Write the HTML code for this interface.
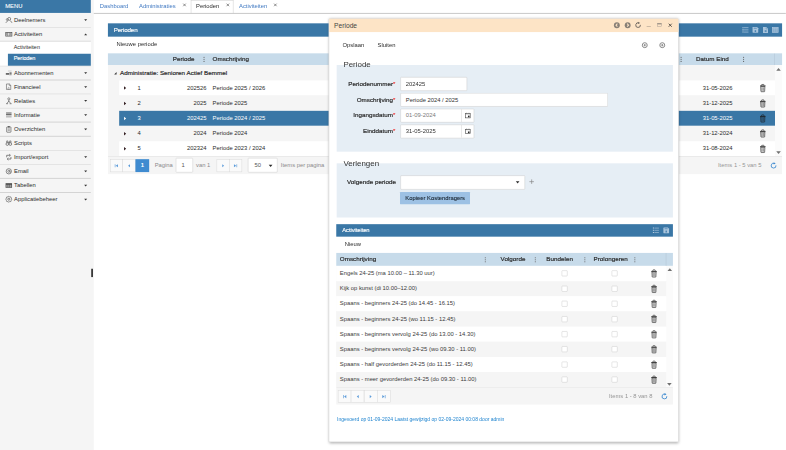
<!DOCTYPE html>
<html><head><meta charset="utf-8"><title>Perioden</title>
<style>
html,body{margin:0;padding:0;background:#fff;width:786px;height:450px;overflow:hidden}
#root{position:absolute;left:0;top:0;width:1886.4px;height:1080px;transform:scale(0.4166667);transform-origin:0 0;font-family:"Liberation Sans",sans-serif;font-size:14px;color:#2b2b2b;overflow:hidden}
#root div,#root svg{position:absolute;display:block}
#root svg{overflow:visible}
#root .tx{white-space:nowrap;transform:translateY(-50%);line-height:20px}
#root .tx span{position:static}
</style></head><body><div id="root">
<div style="left:0.00px;top:0.00px;width:224.88px;height:1080.00px;background:#f5f5f5"></div>
<div style="left:0.00px;top:0.00px;width:217.92px;height:31.44px;background:#3a77a6"></div>
<div class="tx" style="left:12.48px;top:14.88px;color:#fff;-webkit-text-stroke:0.2px #fff">MENU</div>
<div style="left:218.64px;top:644.88px;width:4.56px;height:19.92px;background:#2a2a2a"></div>
<div style="left:0.00px;top:64.85px;width:217.92px;height:1.34px;background:#cdcdcd"></div>
<svg style="left:13.20px;top:40.08px;width:16.32px;height:16.32px;opacity:.85" viewBox="0 0 16 16"><circle cx="9" cy="5.2" r="3.4" fill="none" stroke="#333" stroke-width="1.5"/><path d="M1 14.5L6 9.2 M15.5 14.5L11.5 9.2" stroke="#333" stroke-width="1.6" fill="none"/><circle cx="4.2" cy="6.8" r="2.2" fill="none" stroke="#333" stroke-width="1.3"/></svg>
<div class="tx" style="left:33.60px;top:47.28px;color:#2b2b2b">Deelnemers</div>
<svg style="left:202.08px;top:46.44px;width:7.20px;height:4.56px;" viewBox="0 0 10 6"><path d="M0 0H10L5 6Z" fill="#333"/></svg>
<div style="left:0.00px;top:98.45px;width:217.92px;height:1.34px;background:#cdcdcd"></div>
<svg style="left:13.20px;top:73.92px;width:16.32px;height:16.32px;opacity:.85" viewBox="0 0 16 16"><rect x="0.8" y="3.6" width="14.4" height="8.8" fill="none" stroke="#333" stroke-width="1.7"/><path d="M5.6 4V12 M10.4 4V12" stroke="#333" stroke-width="1.6"/><rect x="2" y="5" width="2.4" height="6" fill="#777"/><rect x="11.6" y="5" width="2.4" height="6" fill="#777"/></svg>
<div class="tx" style="left:33.60px;top:81.12px;color:#2b2b2b">Activiteiten</div>
<svg style="left:202.08px;top:79.80px;width:7.20px;height:4.56px;" viewBox="0 0 10 6"><path d="M0 6H10L5 0Z" fill="#333"/></svg>
<div style="left:0.00px;top:99.60px;width:217.92px;height:58.32px;background:#fff"></div>
<div class="tx" style="left:32.88px;top:114.00px;color:#2b2b2b;font-size:13px">Activiteiten</div>
<div style="left:19.20px;top:128.76px;width:198.72px;height:29.28px;background:#3a77a6"></div>
<div class="tx" style="left:32.88px;top:141.36px;color:#fff;font-size:13.4px;letter-spacing:-0.2px;-webkit-text-stroke:0.3px #fff">Perioden</div>
<div style="left:0.00px;top:157.80px;width:217.92px;height:0.96px;background:#d4d4d4"></div>
<div style="left:0.00px;top:191.23px;width:217.92px;height:1.34px;background:#cdcdcd"></div>
<svg style="left:13.20px;top:166.63px;width:16.32px;height:16.32px;opacity:.85" viewBox="0 0 16 16"><path d="M1 8.4H9V12H1Z" fill="#333"/><path d="M9.6 6.4H14.6V12H9.6Z" fill="#666"/><path d="M6 3.4H14.6" stroke="#aaa" stroke-width="1.4"/><path d="M9 14H14.6" stroke="#bbb" stroke-width="1"/></svg>
<div class="tx" style="left:33.60px;top:173.83px;color:#2b2b2b">Abonnementen</div>
<svg style="left:202.08px;top:172.99px;width:7.20px;height:4.56px;" viewBox="0 0 10 6"><path d="M0 0H10L5 6Z" fill="#333"/></svg>
<div style="left:0.00px;top:224.98px;width:217.92px;height:1.34px;background:#cdcdcd"></div>
<svg style="left:13.20px;top:200.38px;width:16.32px;height:16.32px;opacity:.85" viewBox="0 0 16 16"><path d="M2.5 1.5H9.5L12.5 4.5V14.5H2.5Z" fill="none" stroke="#444" stroke-width="1.4"/><path d="M9 1.5V5H12.5" fill="none" stroke="#444" stroke-width="1.2"/><path d="M9.5 10.5A2 2 0 1 0 9.5 13" fill="none" stroke="#444" stroke-width="1.1"/></svg>
<div class="tx" style="left:33.60px;top:207.58px;color:#2b2b2b">Financieel</div>
<svg style="left:202.08px;top:206.74px;width:7.20px;height:4.56px;" viewBox="0 0 10 6"><path d="M0 0H10L5 6Z" fill="#333"/></svg>
<div style="left:0.00px;top:258.72px;width:217.92px;height:1.34px;background:#cdcdcd"></div>
<svg style="left:13.20px;top:234.12px;width:16.32px;height:16.32px;opacity:.85" viewBox="0 0 16 16"><circle cx="8" cy="3.2" r="2.5" fill="none" stroke="#333" stroke-width="1.4"/><path d="M8 5.8V9 M8 8.4L3.6 14 M8 8.4L12.4 14 M1.6 14.6H6.2 M9.8 14.6H14.4" stroke="#333" stroke-width="1.5" fill="none"/></svg>
<div class="tx" style="left:33.60px;top:241.32px;color:#2b2b2b">Relaties</div>
<svg style="left:202.08px;top:240.48px;width:7.20px;height:4.56px;" viewBox="0 0 10 6"><path d="M0 0H10L5 6Z" fill="#333"/></svg>
<div style="left:0.00px;top:292.46px;width:217.92px;height:1.34px;background:#cdcdcd"></div>
<svg style="left:13.20px;top:267.86px;width:16.32px;height:16.32px;opacity:.85" viewBox="0 0 16 16"><path d="M1.5 3.2H14.5 M1.5 7H14.5" stroke="#333" stroke-width="2.2"/><path d="M1.5 10.6H14.5" stroke="#666" stroke-width="1.6"/><path d="M1.5 13.6H14.5" stroke="#aaa" stroke-width="1.2"/></svg>
<div class="tx" style="left:33.60px;top:275.06px;color:#2b2b2b">Informatie</div>
<svg style="left:202.08px;top:274.22px;width:7.20px;height:4.56px;" viewBox="0 0 10 6"><path d="M0 0H10L5 6Z" fill="#333"/></svg>
<div style="left:0.00px;top:326.21px;width:217.92px;height:1.34px;background:#cdcdcd"></div>
<svg style="left:13.20px;top:301.61px;width:16.32px;height:16.32px;opacity:.85" viewBox="0 0 16 16"><rect x="3" y="2.6" width="10" height="12.4" rx="1" fill="none" stroke="#333" stroke-width="1.5"/><rect x="5.8" y="0.8" width="4.4" height="3" fill="#333"/><path d="M5.5 7.4H10.5 M5.5 10.4H10.5" stroke="#333" stroke-width="1.3"/></svg>
<div class="tx" style="left:33.60px;top:308.81px;color:#2b2b2b">Overzichten</div>
<svg style="left:202.08px;top:307.97px;width:7.20px;height:4.56px;" viewBox="0 0 10 6"><path d="M0 0H10L5 6Z" fill="#333"/></svg>
<div style="left:0.00px;top:359.95px;width:217.92px;height:1.34px;background:#cdcdcd"></div>
<svg style="left:13.20px;top:335.35px;width:16.32px;height:16.32px;opacity:.85" viewBox="0 0 16 16"><circle cx="4.4" cy="10.6" r="3.1" fill="none" stroke="#333" stroke-width="1.5"/><circle cx="11.6" cy="10.6" r="3.1" fill="none" stroke="#333" stroke-width="1.5"/><path d="M3 8V3.2H6V8 M10 8V3.2H13V8 M6 7H10" stroke="#333" stroke-width="1.4" fill="none"/></svg>
<div class="tx" style="left:33.60px;top:342.55px;color:#2b2b2b">Scripts</div>
<div style="left:0.00px;top:393.70px;width:217.92px;height:1.34px;background:#cdcdcd"></div>
<svg style="left:13.20px;top:369.10px;width:16.32px;height:16.32px;opacity:.85" viewBox="0 0 16 16"><path d="M3 8.4V3.6H11 M9 1L11.8 3.6L9 6.2" fill="none" stroke="#333" stroke-width="1.6"/><path d="M13 7.6V12.4H5 M7 9.8L4.2 12.4L7 15" fill="none" stroke="#333" stroke-width="1.6"/></svg>
<div class="tx" style="left:33.60px;top:376.30px;color:#2b2b2b">Import/export</div>
<svg style="left:202.08px;top:375.46px;width:7.20px;height:4.56px;" viewBox="0 0 10 6"><path d="M0 0H10L5 6Z" fill="#333"/></svg>
<div style="left:0.00px;top:427.44px;width:217.92px;height:1.34px;background:#cdcdcd"></div>
<svg style="left:13.20px;top:402.84px;width:16.32px;height:16.32px;opacity:.85" viewBox="0 0 16 16"><circle cx="8" cy="8" r="6.2" fill="none" stroke="#333" stroke-width="1.5"/><circle cx="8" cy="8" r="2.4" fill="none" stroke="#333" stroke-width="1.4"/><path d="M10.6 5.6V9.4Q11 11 12.8 10" fill="none" stroke="#333" stroke-width="1.2"/></svg>
<div class="tx" style="left:33.60px;top:410.04px;color:#2b2b2b">Email</div>
<svg style="left:202.08px;top:409.20px;width:7.20px;height:4.56px;" viewBox="0 0 10 6"><path d="M0 0H10L5 6Z" fill="#333"/></svg>
<div style="left:0.00px;top:461.18px;width:217.92px;height:1.34px;background:#cdcdcd"></div>
<svg style="left:13.20px;top:436.58px;width:16.32px;height:16.32px;opacity:.85" viewBox="0 0 16 16"><rect x="0.4" y="2.6" width="15.2" height="10.8" fill="#2e2e2e"/><path d="M2 6.2H5.2V12H2Z M6.6 6.2H9.6V12H6.6Z M11 6.2H14V12H11Z" fill="#9a9a9a"/></svg>
<div class="tx" style="left:33.60px;top:443.78px;color:#2b2b2b">Tabellen</div>
<svg style="left:202.08px;top:442.94px;width:7.20px;height:4.56px;" viewBox="0 0 10 6"><path d="M0 0H10L5 6Z" fill="#333"/></svg>
<svg style="left:13.20px;top:470.33px;width:16.32px;height:16.32px;opacity:.85" viewBox="0 0 16 16"><circle cx="8" cy="8" r="2.4" fill="none" stroke="#333" stroke-width="1.6"/><path d="M8 1L10 2.4L12.9 2.6L13.6 5L15 8L13.6 11L12.9 13.4L10 13.6L8 15L6 13.6L3.1 13.4L2.4 11L1 8L2.4 5L3.1 2.6L6 2.4Z" fill="none" stroke="#333" stroke-width="1.4"/></svg>
<div class="tx" style="left:33.60px;top:477.53px;color:#2b2b2b">Applicatiebeheer</div>
<svg style="left:202.08px;top:476.69px;width:7.20px;height:4.56px;" viewBox="0 0 10 6"><path d="M0 0H10L5 6Z" fill="#333"/></svg>
<div class="tx" style="left:239.52px;top:14.64px;color:#4079c2">Dashboard</div>
<div class="tx" style="left:333.60px;top:14.64px;color:#4079c2">Administraties</div>
<svg style="left:439.20px;top:8.40px;width:7.68px;height:7.68px;" viewBox="0 0 10 10"><path d="M1 1L9 9 M9 1L1 9" stroke="#666" stroke-width="2.3"/></svg>
<div style="left:458.40px;top:0.48px;width:101.28px;height:31.92px;background:#fff;border:1.3px solid #c4c4c4;border-bottom:none;box-sizing:border-box"></div>
<div style="left:224.88px;top:31.32px;width:1661.52px;height:1.20px;background:#bdbdbd"></div>
<div class="tx" style="left:470.40px;top:14.64px;color:#2b2b2b">Perioden</div>
<svg style="left:543.36px;top:8.40px;width:7.68px;height:7.68px;" viewBox="0 0 10 10"><path d="M1 1L9 9 M9 1L1 9" stroke="#666" stroke-width="2.3"/></svg>
<div class="tx" style="left:573.60px;top:14.64px;color:#4079c2">Activiteiten</div>
<svg style="left:657.36px;top:8.40px;width:7.68px;height:7.68px;" viewBox="0 0 10 10"><path d="M1 1L9 9 M9 1L1 9" stroke="#666" stroke-width="2.3"/></svg>
<div style="left:259.20px;top:56.16px;width:1617.60px;height:31.92px;background:#3a77a6"></div>
<div class="tx" style="left:273.12px;top:71.52px;color:#fff;font-size:15px;letter-spacing:-0.4px;-webkit-text-stroke:0.3px #fff">Perioden</div>
<svg style="left:1780.56px;top:65.04px;width:16.32px;height:13.44px;" viewBox="0 0 14 13"><path d="M0 1.4H2.6 M0 6.5H2.6 M0 11.6H2.6" stroke="#c3d6e6" stroke-width="2.4"/><path d="M3.6 1.4H14 M3.6 6.5H14 M3.6 11.6H14" stroke="#8fb3d1" stroke-width="2.2"/></svg>
<svg style="left:1806.24px;top:64.92px;width:13.92px;height:13.68px;" viewBox="0 0 14 14"><path d="M1 0H11L14 3V13Q14 14 13 14H1Q0 14 0 13V1Q0 0 1 0Z" fill="#aac5dc"/><rect x="3" y="1.4" width="7.4" height="3" fill="#6e9cc3"/><rect x="5.2" y="7.6" width="3.6" height="4.6" fill="#4d86b3"/></svg>
<svg style="left:1831.20px;top:64.80px;width:12.48px;height:13.92px;" viewBox="0 0 12 14"><path d="M0 0H8L12 4V14H0Z" fill="#aac5dc"/><path d="M7.4 0.6V4.6H11.4" fill="none" stroke="#5b90ba" stroke-width="1.3"/><rect x="4" y="7.4" width="4.6" height="4.6" fill="#5b90ba"/></svg>
<svg style="left:1852.80px;top:65.04px;width:15.36px;height:13.44px;" viewBox="0 0 16 14"><rect x="0.8" y="0.8" width="14.4" height="12.4" fill="#84aaca" stroke="#b3cbe0" stroke-width="1.6"/><path d="M5.6 1.6V12.4 M10.4 1.6V12.4" stroke="#b3cbe0" stroke-width="1"/><path d="M1.4 4.2H14.6" stroke="#b3cbe0" stroke-width="1"/></svg>
<div class="tx" style="left:279.84px;top:104.64px;color:#2b2b2b">Nieuwe periode</div>
<div style="left:259.20px;top:127.68px;width:1617.60px;height:28.80px;background:#c7dbea"></div>
<div class="tx" style="right:calc(1886.4px - 466.56px);top:141.60px;color:#2a2a2a;font-size:15px;-webkit-text-stroke:0.45px #2a2a2a;letter-spacing:0.05px">Periode</div>
<svg style="left:488.40px;top:135.84px;width:3.36px;height:12.96px;" viewBox="0 0 4 16"><circle cx="2" cy="2" r="1.6" fill="#5e5e5e"/><circle cx="2" cy="8" r="1.6" fill="#5e5e5e"/><circle cx="2" cy="14" r="1.6" fill="#5e5e5e"/></svg>
<div class="tx" style="left:510.24px;top:141.60px;color:#2a2a2a;font-size:15px;-webkit-text-stroke:0.45px #2a2a2a;letter-spacing:0.05px">Omschrijving</div>
<svg style="left:1633.44px;top:135.84px;width:3.36px;height:12.96px;" viewBox="0 0 4 16"><circle cx="2" cy="2" r="1.6" fill="#5e5e5e"/><circle cx="2" cy="8" r="1.6" fill="#5e5e5e"/><circle cx="2" cy="14" r="1.6" fill="#5e5e5e"/></svg>
<div class="tx" style="left:1670.40px;top:141.60px;color:#2a2a2a;font-size:15px;-webkit-text-stroke:0.45px #2a2a2a;letter-spacing:0.05px">Datum Eind</div>
<svg style="left:1782.96px;top:135.84px;width:3.36px;height:12.96px;" viewBox="0 0 4 16"><circle cx="2" cy="2" r="1.6" fill="#5e5e5e"/><circle cx="2" cy="8" r="1.6" fill="#5e5e5e"/><circle cx="2" cy="14" r="1.6" fill="#5e5e5e"/></svg>
<div style="left:1859.28px;top:127.68px;width:0.96px;height:29.04px;background:#aebfce"></div>
<div style="left:259.20px;top:156.48px;width:1617.60px;height:218.16px;background:#f5f5f5"></div>
<div style="left:1860.48px;top:156.48px;width:16.32px;height:218.16px;background:#fbfbfb"></div>
<svg style="left:1862.88px;top:163.20px;width:11.04px;height:6.72px;" viewBox="0 0 10 6"><path d="M0 6H10L5 0Z" fill="#707070"/></svg>
<svg style="left:1862.64px;top:363.12px;width:11.04px;height:6.72px;" viewBox="0 0 10 6"><path d="M0 0H10L5 6Z" fill="#707070"/></svg>
<svg style="left:273.60px;top:172.80px;width:5.76px;height:5.76px;" viewBox="0 0 10 10"><path d="M10 0V10H0Z" fill="#333"/></svg>
<div class="tx" style="left:288.00px;top:174.00px;color:#2a2a2a;font-size:15px;-webkit-text-stroke:0.45px #2a2a2a;letter-spacing:0.05px">Administratie: Senioren Actief Bemmel</div>
<div style="left:285.60px;top:193.20px;width:1574.88px;height:36.00px;background:#fff"></div>
<svg style="left:297.48px;top:207.48px;width:6.48px;height:8.40px;" viewBox="0 0 6 10"><path d="M0 0V10L6 5Z" fill="#2a1518"/></svg>
<div class="tx" style="left:329.76px;top:210.24px;color:#2b2b2b">1</div>
<div class="tx" style="right:calc(1886.4px - 495.60px);top:210.24px;color:#2b2b2b">202526</div>
<div class="tx" style="left:510.24px;top:210.24px;color:#2b2b2b">Periode 2025 / 2026</div>
<div class="tx" style="left:1686.48px;top:210.24px;color:#2b2b2b">31-05-2026</div>
<svg style="left:1822.80px;top:202.08px;width:15.36px;height:18.72px;" viewBox="0 0 14 18"><path d="M0.5 3.1H13.5V4.9H0.5Z" fill="#1a1a1a"/><path d="M4.3 3.2V1.5Q4.3 0.7 5.1 0.7H8.9Q9.7 0.7 9.7 1.5V3.2" fill="none" stroke="#1a1a1a" stroke-width="1.4"/><path d="M2.1 5.4H11.9L11.3 16.6Q11.2 17.4 10.4 17.4H3.6Q2.8 17.4 2.7 16.6Z" fill="rgba(30,30,30,.16)" stroke="#1a1a1a" stroke-width="1.25"/><path d="M5.4 7.4V15.2 M8.6 7.4V15.2" stroke="#1a1a1a" stroke-width="0.9" opacity=".8"/></svg>
<div style="left:285.60px;top:229.20px;width:1574.88px;height:36.96px;background:#f5f5f5"></div>
<svg style="left:297.48px;top:243.96px;width:6.48px;height:8.40px;" viewBox="0 0 6 10"><path d="M0 0V10L6 5Z" fill="#2a1518"/></svg>
<div class="tx" style="left:329.76px;top:246.72px;color:#2b2b2b">2</div>
<div class="tx" style="right:calc(1886.4px - 495.60px);top:246.72px;color:#2b2b2b">2025</div>
<div class="tx" style="left:510.24px;top:246.72px;color:#2b2b2b">Periode 2025</div>
<div class="tx" style="left:1686.48px;top:246.72px;color:#2b2b2b">31-12-2025</div>
<svg style="left:1822.80px;top:238.56px;width:15.36px;height:18.72px;" viewBox="0 0 14 18"><path d="M0.5 3.1H13.5V4.9H0.5Z" fill="#1a1a1a"/><path d="M4.3 3.2V1.5Q4.3 0.7 5.1 0.7H8.9Q9.7 0.7 9.7 1.5V3.2" fill="none" stroke="#1a1a1a" stroke-width="1.4"/><path d="M2.1 5.4H11.9L11.3 16.6Q11.2 17.4 10.4 17.4H3.6Q2.8 17.4 2.7 16.6Z" fill="rgba(30,30,30,.16)" stroke="#1a1a1a" stroke-width="1.25"/><path d="M5.4 7.4V15.2 M8.6 7.4V15.2" stroke="#1a1a1a" stroke-width="0.9" opacity=".8"/></svg>
<div style="left:285.60px;top:266.16px;width:1574.88px;height:35.88px;background:#3a77a6"></div>
<svg style="left:297.48px;top:280.38px;width:6.48px;height:8.40px;" viewBox="0 0 6 10"><path d="M0 0V10L6 5Z" fill="#fff"/></svg>
<div class="tx" style="left:329.76px;top:283.14px;color:#fff">3</div>
<div class="tx" style="right:calc(1886.4px - 495.60px);top:283.14px;color:#fff">202425</div>
<div class="tx" style="left:510.24px;top:283.14px;color:#fff">Periode 2024 / 2025</div>
<div class="tx" style="left:1686.48px;top:283.14px;color:#fff">31-05-2025</div>
<svg style="left:1822.80px;top:274.98px;width:15.36px;height:18.72px;" viewBox="0 0 14 18"><path d="M0.5 3.1H13.5V4.9H0.5Z" fill="#1a1a1a"/><path d="M4.3 3.2V1.5Q4.3 0.7 5.1 0.7H8.9Q9.7 0.7 9.7 1.5V3.2" fill="none" stroke="#1a1a1a" stroke-width="1.4"/><path d="M2.1 5.4H11.9L11.3 16.6Q11.2 17.4 10.4 17.4H3.6Q2.8 17.4 2.7 16.6Z" fill="rgba(30,30,30,.16)" stroke="#1a1a1a" stroke-width="1.25"/><path d="M5.4 7.4V15.2 M8.6 7.4V15.2" stroke="#1a1a1a" stroke-width="0.9" opacity=".8"/></svg>
<div style="left:285.60px;top:302.04px;width:1574.88px;height:36.60px;background:#f5f5f5"></div>
<svg style="left:297.48px;top:316.62px;width:6.48px;height:8.40px;" viewBox="0 0 6 10"><path d="M0 0V10L6 5Z" fill="#2a1518"/></svg>
<div class="tx" style="left:329.76px;top:319.38px;color:#2b2b2b">4</div>
<div class="tx" style="right:calc(1886.4px - 495.60px);top:319.38px;color:#2b2b2b">2024</div>
<div class="tx" style="left:510.24px;top:319.38px;color:#2b2b2b">Periode 2024</div>
<div class="tx" style="left:1686.48px;top:319.38px;color:#2b2b2b">31-12-2024</div>
<svg style="left:1822.80px;top:311.22px;width:15.36px;height:18.72px;" viewBox="0 0 14 18"><path d="M0.5 3.1H13.5V4.9H0.5Z" fill="#1a1a1a"/><path d="M4.3 3.2V1.5Q4.3 0.7 5.1 0.7H8.9Q9.7 0.7 9.7 1.5V3.2" fill="none" stroke="#1a1a1a" stroke-width="1.4"/><path d="M2.1 5.4H11.9L11.3 16.6Q11.2 17.4 10.4 17.4H3.6Q2.8 17.4 2.7 16.6Z" fill="rgba(30,30,30,.16)" stroke="#1a1a1a" stroke-width="1.25"/><path d="M5.4 7.4V15.2 M8.6 7.4V15.2" stroke="#1a1a1a" stroke-width="0.9" opacity=".8"/></svg>
<div style="left:285.60px;top:338.64px;width:1574.88px;height:36.00px;background:#fff"></div>
<svg style="left:297.48px;top:352.92px;width:6.48px;height:8.40px;" viewBox="0 0 6 10"><path d="M0 0V10L6 5Z" fill="#2a1518"/></svg>
<div class="tx" style="left:329.76px;top:355.68px;color:#2b2b2b">5</div>
<div class="tx" style="right:calc(1886.4px - 495.60px);top:355.68px;color:#2b2b2b">202324</div>
<div class="tx" style="left:510.24px;top:355.68px;color:#2b2b2b">Periode 2023 / 2024</div>
<div class="tx" style="left:1686.48px;top:355.68px;color:#2b2b2b">31-08-2024</div>
<svg style="left:1822.80px;top:347.52px;width:15.36px;height:18.72px;" viewBox="0 0 14 18"><path d="M0.5 3.1H13.5V4.9H0.5Z" fill="#1a1a1a"/><path d="M4.3 3.2V1.5Q4.3 0.7 5.1 0.7H8.9Q9.7 0.7 9.7 1.5V3.2" fill="none" stroke="#1a1a1a" stroke-width="1.4"/><path d="M2.1 5.4H11.9L11.3 16.6Q11.2 17.4 10.4 17.4H3.6Q2.8 17.4 2.7 16.6Z" fill="rgba(30,30,30,.16)" stroke="#1a1a1a" stroke-width="1.25"/><path d="M5.4 7.4V15.2 M8.6 7.4V15.2" stroke="#1a1a1a" stroke-width="0.9" opacity=".8"/></svg>
<div style="left:259.20px;top:374.64px;width:1617.60px;height:43.44px;background:#f5f5f5;border-top:1px solid #d9d9d9;box-sizing:border-box"></div>
<div style="left:263.52px;top:381.84px;width:30.72px;height:31.20px;border:1px solid #d4d4d4;box-sizing:border-box;background:#fafafa"></div>
<svg style="left:274.56px;top:393.60px;width:8.64px;height:7.68px;" viewBox="0 0 10 10"><path d="M0 0H2V10H0Z M10 0V10L3 5Z" fill="#5d9cda"/></svg>
<div style="left:293.76px;top:381.84px;width:31.68px;height:31.20px;border:1px solid #d4d4d4;box-sizing:border-box;background:#fafafa"></div>
<svg style="left:306.96px;top:393.60px;width:5.28px;height:7.68px;" viewBox="0 0 6 10"><path d="M6 0V10L0 5Z" fill="#5d9cda"/></svg>
<div style="left:325.44px;top:381.84px;width:32.16px;height:31.20px;background:#3f8bd0"></div>
<div class="tx" style="left:341.52px;top:396.48px;transform:translate(-50%,-50%);color:#fff;font-weight:bold">1</div>
<div class="tx" style="left:371.28px;top:396.48px;color:#8a8a8a">Pagina</div>
<div style="left:422.16px;top:379.20px;width:41.04px;height:34.32px;background:#fff;border:1.4px solid #c6c6c6;box-sizing:border-box;border-radius:2px"></div>
<div class="tx" style="left:435.36px;top:396.48px;color:#555">1</div>
<div class="tx" style="left:470.40px;top:396.48px;color:#8a8a8a">van 1</div>
<div style="left:520.08px;top:381.84px;width:30.72px;height:31.20px;border:1px solid #d4d4d4;box-sizing:border-box;background:#fafafa"></div>
<svg style="left:532.80px;top:393.60px;width:5.28px;height:7.68px;" viewBox="0 0 6 10"><path d="M0 0V10L6 5Z" fill="#5d9cda"/></svg>
<div style="left:550.32px;top:381.84px;width:30.72px;height:31.20px;border:1px solid #d4d4d4;box-sizing:border-box;background:#fafafa"></div>
<svg style="left:561.36px;top:393.60px;width:8.64px;height:7.68px;" viewBox="0 0 10 10"><path d="M8 0H10V10H8Z M0 0V10L7 5Z" fill="#5d9cda"/></svg>
<div style="left:595.20px;top:379.20px;width:70.56px;height:34.32px;background:#fff;border:1.4px solid #c6c6c6;box-sizing:border-box;border-radius:2px"></div>
<div class="tx" style="left:610.56px;top:396.48px;color:#555">50</div>
<svg style="left:645.00px;top:395.04px;width:8.88px;height:5.76px;" viewBox="0 0 10 6"><path d="M0 0H10L5 6Z" fill="#2a2a2a"/></svg>
<div class="tx" style="left:673.92px;top:396.48px;color:#8a8a8a">Items per pagina</div>
<div class="tx" style="left:1723.20px;top:396.48px;color:#959595">Items 1 - 5 van 5</div>
<svg style="left:1848.96px;top:390.00px;width:15.36px;height:15.36px;" viewBox="0 0 16 16"><path d="M10.2 2.3A6 6 0 1 0 13.9 7.2" fill="none" stroke="#3f8bd0" stroke-width="2.2"/><path d="M8.2 -0.8L13.2 2.4L8.2 5.2Z" fill="#3f8bd0"/></svg>
<div style="left:788.88px;top:44.64px;width:839.76px;height:1016.64px;background:#fff;border:1px solid #c8c8c8;box-sizing:border-box;box-shadow:0 1px 7px rgba(0,0,0,.38)"></div>
<div style="left:789.60px;top:45.36px;width:838.32px;height:31.20px;background:#fde4c6"></div>
<div class="tx" style="left:801.84px;top:60.96px;color:#444;font-size:16px">Periode</div>
<svg style="left:1473.36px;top:52.56px;width:14.88px;height:14.88px;" viewBox="0 0 16 16"><circle cx="8" cy="8" r="7.6" fill="#877f76"/><path d="M9.4 4.2L5.8 8L9.4 11.8" fill="none" stroke="#fde4c6" stroke-width="2.7"/></svg>
<svg style="left:1499.04px;top:52.56px;width:14.88px;height:14.88px;" viewBox="0 0 16 16"><circle cx="8" cy="8" r="7.6" fill="#877f76"/><path d="M6.6 4.2L10.2 8L6.6 11.8" fill="none" stroke="#fde4c6" stroke-width="2.7"/></svg>
<svg style="left:1523.76px;top:52.56px;width:14.88px;height:14.88px;" viewBox="0 0 16 16"><path d="M10.2 2.3A6 6 0 1 0 13.9 7.2" fill="none" stroke="#6f675f" stroke-width="2.5"/><path d="M8.2 -0.8L13.2 2.4L8.2 5.2Z" fill="#6f675f"/></svg>
<div style="left:1552.32px;top:62.64px;width:10.08px;height:1.44px;background:#877f76"></div>
<svg style="left:1576.80px;top:55.44px;width:11.52px;height:10.08px;" viewBox="0 0 12 11"><rect x="1" y="1" width="10" height="9" fill="none" stroke="#a59c92" stroke-width="1.2"/><rect x="1" y="1" width="10" height="2.8" fill="#8f877d"/></svg>
<svg style="left:1604.16px;top:55.92px;width:9.12px;height:9.12px;" viewBox="0 0 10 10"><path d="M1 1L9 9 M9 1L1 9" stroke="#4a4540" stroke-width="2.3"/></svg>
<div class="tx" style="left:822.00px;top:107.04px;color:#2b2b2b">Opslaan</div>
<div class="tx" style="left:906.24px;top:107.04px;color:#2b2b2b">Sluiten</div>
<svg style="left:1539.84px;top:100.80px;width:14.88px;height:14.88px;" viewBox="0 0 16 16"><circle cx="8" cy="8" r="6.4" fill="#fff" stroke="#868686" stroke-width="2.5"/><path d="M12.6 8H8 M8.8 5L5.4 8L8.8 11Z" fill="#868686" stroke="#868686" stroke-width="1.2"/></svg>
<svg style="left:1581.60px;top:100.80px;width:14.88px;height:14.88px;" viewBox="0 0 16 16"><circle cx="8" cy="8" r="6.4" fill="#fff" stroke="#868686" stroke-width="2.5"/><path d="M3.4 8H8 M7.2 5L10.6 8L7.2 11Z" fill="#868686" stroke="#868686" stroke-width="1.2"/></svg>
<div style="left:807.84px;top:155.76px;width:807.12px;height:208.08px;background:#e6eef5"></div>
<div class="tx" style="left:824.16px;top:154.56px;color:#333;font-size:19px">Periode</div>
<div class="tx" style="right:calc(1886.4px - 948.72px);top:200.64px;color:#2a2a2a;font-size:15px;-webkit-text-stroke:0.45px #2a2a2a;letter-spacing:0.05px">Periodenummer<span style="color:#f01818;-webkit-text-stroke:0.15px #f01818;font-size:14px">*</span></div>
<div style="left:960.72px;top:185.04px;width:159.84px;height:32.88px;background:#fff;border:1.5px solid #c3c3c3;box-sizing:border-box;border-radius:2px"></div>
<div class="tx" style="left:973.92px;top:200.64px;color:#333">202425</div>
<div class="tx" style="right:calc(1886.4px - 948.72px);top:238.80px;color:#2a2a2a;font-size:15px;-webkit-text-stroke:0.45px #2a2a2a;letter-spacing:0.05px">Omschrijving<span style="color:#f01818;-webkit-text-stroke:0.15px #f01818;font-size:14px">*</span></div>
<div style="left:960.72px;top:223.20px;width:498.24px;height:32.88px;background:#fff;border:1.5px solid #c3c3c3;box-sizing:border-box;border-radius:2px"></div>
<div class="tx" style="left:973.92px;top:238.80px;color:#333">Periode 2024 / 2025</div>
<div class="tx" style="right:calc(1886.4px - 948.72px);top:276.48px;color:#2a2a2a;font-size:15px;-webkit-text-stroke:0.45px #2a2a2a;letter-spacing:0.05px">Ingangsdatum<span style="color:#f01818;-webkit-text-stroke:0.15px #f01818;font-size:14px">*</span></div>
<div style="left:960.72px;top:260.88px;width:177.60px;height:32.88px;background:#fff;border:1.5px solid #c3c3c3;box-sizing:border-box;border-radius:2px"></div>
<div class="tx" style="left:973.92px;top:276.48px;color:#7a7a7a">01-09-2024</div>
<div class="tx" style="right:calc(1886.4px - 948.72px);top:314.40px;color:#2a2a2a;font-size:15px;-webkit-text-stroke:0.45px #2a2a2a;letter-spacing:0.05px">Einddatum<span style="color:#f01818;-webkit-text-stroke:0.15px #f01818;font-size:14px">*</span></div>
<div style="left:960.72px;top:298.80px;width:177.60px;height:32.88px;background:#fff;border:1.5px solid #c3c3c3;box-sizing:border-box;border-radius:2px"></div>
<div class="tx" style="left:973.92px;top:314.40px;color:#333">31-05-2025</div>
<div style="left:1107.12px;top:262.08px;width:1.32px;height:30.48px;background:#c9c9c9"></div>
<svg style="left:1116.24px;top:270.48px;width:13.44px;height:13.92px;" viewBox="0 0 14 14"><rect x="1" y="2.2" width="12" height="11" fill="#fff" stroke="#3c3c3c" stroke-width="1.4"/><path d="M1 2.4H13V4.2H1Z" fill="#888"/><rect x="7.4" y="7.6" width="4" height="4" fill="#2a2a2a"/><path d="M4 0.4V2.6 M10 0.4V2.6" stroke="#555" stroke-width="1.3"/></svg>
<div style="left:1107.12px;top:300.00px;width:1.32px;height:30.48px;background:#c9c9c9"></div>
<svg style="left:1116.24px;top:308.40px;width:13.44px;height:13.92px;" viewBox="0 0 14 14"><rect x="1" y="2.2" width="12" height="11" fill="#fff" stroke="#3c3c3c" stroke-width="1.4"/><path d="M1 2.4H13V4.2H1Z" fill="#888"/><rect x="7.4" y="7.6" width="4" height="4" fill="#2a2a2a"/><path d="M4 0.4V2.6 M10 0.4V2.6" stroke="#555" stroke-width="1.3"/></svg>
<div style="left:807.84px;top:392.16px;width:807.12px;height:129.60px;background:#e6eef5"></div>
<div class="tx" style="left:824.16px;top:392.40px;color:#333;font-size:19px">Verlengen</div>
<div class="tx" style="right:calc(1886.4px - 950.16px);top:437.04px;color:#2a2a2a;font-size:15px;-webkit-text-stroke:0.45px #2a2a2a;letter-spacing:0.05px">Volgende periode</div>
<div style="left:960.72px;top:420.96px;width:299.04px;height:33.84px;background:#fff;border:1.5px solid #c3c3c3;box-sizing:border-box;border-radius:2px"></div>
<svg style="left:1238.16px;top:434.88px;width:8.64px;height:5.76px;" viewBox="0 0 10 6"><path d="M0 0H10L5 6Z" fill="#2a2a2a"/></svg>
<svg style="left:1269.60px;top:429.60px;width:12.00px;height:12.00px;" viewBox="0 0 10 10"><path d="M5 0.5V9.5 M0.5 5H9.5" stroke="#808080" stroke-width="1.3"/></svg>
<div style="left:960.48px;top:460.56px;width:167.52px;height:29.28px;background:#9dc1e4;border-radius:1px"></div>
<div class="tx" style="left:1044.48px;top:474.24px;transform:translate(-50%,-50%);color:#15202b;-webkit-text-stroke:0.2px #15202b">Kopieer Kostendragers</div>
<div style="left:806.88px;top:537.60px;width:808.08px;height:30.48px;background:#3a77a6"></div>
<div class="tx" style="left:821.52px;top:552.48px;color:#fff;font-size:14px;letter-spacing:-0.2px;-webkit-text-stroke:0.35px #fff">Activiteiten</div>
<svg style="left:1566.00px;top:546.00px;width:16.32px;height:13.44px;" viewBox="0 0 14 13"><path d="M0 1.4H2.6 M0 6.5H2.6 M0 11.6H2.6" stroke="#b5cbdf" stroke-width="2.4"/><path d="M3.6 1.4H14 M3.6 6.5H14 M3.6 11.6H14" stroke="#86abc9" stroke-width="2.2"/></svg>
<svg style="left:1591.92px;top:545.88px;width:13.92px;height:13.68px;" viewBox="0 0 14 14"><path d="M1 0H11L14 3V13Q14 14 13 14H1Q0 14 0 13V1Q0 0 1 0Z" fill="#aac5dc"/><rect x="3" y="1.4" width="7.4" height="3" fill="#6e9cc3"/><rect x="5.2" y="7.6" width="3.6" height="4.6" fill="#4d86b3"/></svg>
<div class="tx" style="left:827.28px;top:586.08px;color:#2b2b2b">Nieuw</div>
<div style="left:806.88px;top:606.96px;width:808.08px;height:31.20px;background:#c7dbea"></div>
<div class="tx" style="left:815.52px;top:622.32px;color:#2a2a2a;font-size:15px;-webkit-text-stroke:0.45px #2a2a2a;letter-spacing:0.05px">Omschrijving</div>
<svg style="left:1163.04px;top:616.56px;width:3.36px;height:12.96px;" viewBox="0 0 4 16"><circle cx="2" cy="2" r="1.6" fill="#5e5e5e"/><circle cx="2" cy="8" r="1.6" fill="#5e5e5e"/><circle cx="2" cy="14" r="1.6" fill="#5e5e5e"/></svg>
<div class="tx" style="right:calc(1886.4px - 1260.96px);top:622.32px;color:#2a2a2a;font-size:15px;-webkit-text-stroke:0.45px #2a2a2a;letter-spacing:0.05px">Volgorde</div>
<svg style="left:1283.04px;top:616.56px;width:3.36px;height:12.96px;" viewBox="0 0 4 16"><circle cx="2" cy="2" r="1.6" fill="#5e5e5e"/><circle cx="2" cy="8" r="1.6" fill="#5e5e5e"/><circle cx="2" cy="14" r="1.6" fill="#5e5e5e"/></svg>
<div class="tx" style="left:1311.12px;top:622.32px;color:#2a2a2a;font-size:15px;-webkit-text-stroke:0.45px #2a2a2a;letter-spacing:0.05px">Bundelen</div>
<svg style="left:1401.60px;top:616.56px;width:3.36px;height:12.96px;" viewBox="0 0 4 16"><circle cx="2" cy="2" r="1.6" fill="#5e5e5e"/><circle cx="2" cy="8" r="1.6" fill="#5e5e5e"/><circle cx="2" cy="14" r="1.6" fill="#5e5e5e"/></svg>
<div class="tx" style="left:1424.40px;top:622.32px;color:#2a2a2a;font-size:15px;-webkit-text-stroke:0.45px #2a2a2a;letter-spacing:0.05px">Prolongeren</div>
<svg style="left:1522.32px;top:616.56px;width:3.36px;height:12.96px;" viewBox="0 0 4 16"><circle cx="2" cy="2" r="1.6" fill="#5e5e5e"/><circle cx="2" cy="8" r="1.6" fill="#5e5e5e"/><circle cx="2" cy="14" r="1.6" fill="#5e5e5e"/></svg>
<div style="left:1598.40px;top:607.20px;width:0.96px;height:31.68px;background:#aebfce"></div>
<div style="left:806.88px;top:638.16px;width:808.08px;height:291.26px;background:#fbfbfb"></div>
<svg style="left:1601.52px;top:643.68px;width:11.04px;height:6.72px;" viewBox="0 0 10 6"><path d="M0 6H10L5 0Z" fill="#707070"/></svg>
<svg style="left:1601.28px;top:919.44px;width:11.04px;height:6.72px;" viewBox="0 0 10 6"><path d="M0 0H10L5 6Z" fill="#707070"/></svg>
<div style="left:806.88px;top:638.16px;width:792.00px;height:36.41px;background:#fff"></div>
<div class="tx" style="left:815.52px;top:655.40px;color:#3a3a3a">Engels 24-25 (ma 10.00 &ndash; 11.30 uur)</div>
<div style="left:1348.08px;top:649.40px;width:13.92px;height:13.92px;border:1px solid #c2c2c2;border-radius:2px;background:#fff;box-sizing:border-box"></div>
<div style="left:1467.60px;top:649.40px;width:13.92px;height:13.92px;border:1px solid #c2c2c2;border-radius:2px;background:#fff;box-sizing:border-box"></div>
<svg style="left:1561.92px;top:647.24px;width:15.36px;height:18.72px;" viewBox="0 0 14 18"><path d="M0.5 3.1H13.5V4.9H0.5Z" fill="#1a1a1a"/><path d="M4.3 3.2V1.5Q4.3 0.7 5.1 0.7H8.9Q9.7 0.7 9.7 1.5V3.2" fill="none" stroke="#1a1a1a" stroke-width="1.4"/><path d="M2.1 5.4H11.9L11.3 16.6Q11.2 17.4 10.4 17.4H3.6Q2.8 17.4 2.7 16.6Z" fill="rgba(30,30,30,.16)" stroke="#1a1a1a" stroke-width="1.25"/><path d="M5.4 7.4V15.2 M8.6 7.4V15.2" stroke="#1a1a1a" stroke-width="0.9" opacity=".8"/></svg>
<div style="left:806.88px;top:674.57px;width:792.00px;height:36.41px;background:#f5f5f5"></div>
<div class="tx" style="left:815.52px;top:691.81px;color:#3a3a3a">Kijk op kunst (di 10.00&ndash;12.00)</div>
<div style="left:1348.08px;top:685.81px;width:13.92px;height:13.92px;border:1px solid #c2c2c2;border-radius:2px;background:#fff;box-sizing:border-box"></div>
<div style="left:1467.60px;top:685.81px;width:13.92px;height:13.92px;border:1px solid #c2c2c2;border-radius:2px;background:#fff;box-sizing:border-box"></div>
<svg style="left:1561.92px;top:683.65px;width:15.36px;height:18.72px;" viewBox="0 0 14 18"><path d="M0.5 3.1H13.5V4.9H0.5Z" fill="#1a1a1a"/><path d="M4.3 3.2V1.5Q4.3 0.7 5.1 0.7H8.9Q9.7 0.7 9.7 1.5V3.2" fill="none" stroke="#1a1a1a" stroke-width="1.4"/><path d="M2.1 5.4H11.9L11.3 16.6Q11.2 17.4 10.4 17.4H3.6Q2.8 17.4 2.7 16.6Z" fill="rgba(30,30,30,.16)" stroke="#1a1a1a" stroke-width="1.25"/><path d="M5.4 7.4V15.2 M8.6 7.4V15.2" stroke="#1a1a1a" stroke-width="0.9" opacity=".8"/></svg>
<div style="left:806.88px;top:710.98px;width:792.00px;height:36.41px;background:#fff"></div>
<div class="tx" style="left:815.52px;top:728.22px;color:#3a3a3a">Spaans - beginners 24-25 (do 14.45 - 16.15)</div>
<div style="left:1348.08px;top:722.22px;width:13.92px;height:13.92px;border:1px solid #c2c2c2;border-radius:2px;background:#fff;box-sizing:border-box"></div>
<div style="left:1467.60px;top:722.22px;width:13.92px;height:13.92px;border:1px solid #c2c2c2;border-radius:2px;background:#fff;box-sizing:border-box"></div>
<svg style="left:1561.92px;top:720.06px;width:15.36px;height:18.72px;" viewBox="0 0 14 18"><path d="M0.5 3.1H13.5V4.9H0.5Z" fill="#1a1a1a"/><path d="M4.3 3.2V1.5Q4.3 0.7 5.1 0.7H8.9Q9.7 0.7 9.7 1.5V3.2" fill="none" stroke="#1a1a1a" stroke-width="1.4"/><path d="M2.1 5.4H11.9L11.3 16.6Q11.2 17.4 10.4 17.4H3.6Q2.8 17.4 2.7 16.6Z" fill="rgba(30,30,30,.16)" stroke="#1a1a1a" stroke-width="1.25"/><path d="M5.4 7.4V15.2 M8.6 7.4V15.2" stroke="#1a1a1a" stroke-width="0.9" opacity=".8"/></svg>
<div style="left:806.88px;top:747.38px;width:792.00px;height:36.41px;background:#f5f5f5"></div>
<div class="tx" style="left:815.52px;top:764.63px;color:#3a3a3a">Spaans - beginners 24-25 (wo 11.15 - 12.45)</div>
<div style="left:1348.08px;top:758.63px;width:13.92px;height:13.92px;border:1px solid #c2c2c2;border-radius:2px;background:#fff;box-sizing:border-box"></div>
<div style="left:1467.60px;top:758.63px;width:13.92px;height:13.92px;border:1px solid #c2c2c2;border-radius:2px;background:#fff;box-sizing:border-box"></div>
<svg style="left:1561.92px;top:756.47px;width:15.36px;height:18.72px;" viewBox="0 0 14 18"><path d="M0.5 3.1H13.5V4.9H0.5Z" fill="#1a1a1a"/><path d="M4.3 3.2V1.5Q4.3 0.7 5.1 0.7H8.9Q9.7 0.7 9.7 1.5V3.2" fill="none" stroke="#1a1a1a" stroke-width="1.4"/><path d="M2.1 5.4H11.9L11.3 16.6Q11.2 17.4 10.4 17.4H3.6Q2.8 17.4 2.7 16.6Z" fill="rgba(30,30,30,.16)" stroke="#1a1a1a" stroke-width="1.25"/><path d="M5.4 7.4V15.2 M8.6 7.4V15.2" stroke="#1a1a1a" stroke-width="0.9" opacity=".8"/></svg>
<div style="left:806.88px;top:783.79px;width:792.00px;height:36.41px;background:#fff"></div>
<div class="tx" style="left:815.52px;top:801.04px;color:#3a3a3a">Spaans - beginners vervolg 24-25 (do 13.00 - 14.30)</div>
<div style="left:1348.08px;top:795.04px;width:13.92px;height:13.92px;border:1px solid #c2c2c2;border-radius:2px;background:#fff;box-sizing:border-box"></div>
<div style="left:1467.60px;top:795.04px;width:13.92px;height:13.92px;border:1px solid #c2c2c2;border-radius:2px;background:#fff;box-sizing:border-box"></div>
<svg style="left:1561.92px;top:792.88px;width:15.36px;height:18.72px;" viewBox="0 0 14 18"><path d="M0.5 3.1H13.5V4.9H0.5Z" fill="#1a1a1a"/><path d="M4.3 3.2V1.5Q4.3 0.7 5.1 0.7H8.9Q9.7 0.7 9.7 1.5V3.2" fill="none" stroke="#1a1a1a" stroke-width="1.4"/><path d="M2.1 5.4H11.9L11.3 16.6Q11.2 17.4 10.4 17.4H3.6Q2.8 17.4 2.7 16.6Z" fill="rgba(30,30,30,.16)" stroke="#1a1a1a" stroke-width="1.25"/><path d="M5.4 7.4V15.2 M8.6 7.4V15.2" stroke="#1a1a1a" stroke-width="0.9" opacity=".8"/></svg>
<div style="left:806.88px;top:820.20px;width:792.00px;height:36.41px;background:#f5f5f5"></div>
<div class="tx" style="left:815.52px;top:837.44px;color:#3a3a3a">Spaans - beginners vervolg 24-25 (wo 09.30 - 11.00)</div>
<div style="left:1348.08px;top:831.44px;width:13.92px;height:13.92px;border:1px solid #c2c2c2;border-radius:2px;background:#fff;box-sizing:border-box"></div>
<div style="left:1467.60px;top:831.44px;width:13.92px;height:13.92px;border:1px solid #c2c2c2;border-radius:2px;background:#fff;box-sizing:border-box"></div>
<svg style="left:1561.92px;top:829.28px;width:15.36px;height:18.72px;" viewBox="0 0 14 18"><path d="M0.5 3.1H13.5V4.9H0.5Z" fill="#1a1a1a"/><path d="M4.3 3.2V1.5Q4.3 0.7 5.1 0.7H8.9Q9.7 0.7 9.7 1.5V3.2" fill="none" stroke="#1a1a1a" stroke-width="1.4"/><path d="M2.1 5.4H11.9L11.3 16.6Q11.2 17.4 10.4 17.4H3.6Q2.8 17.4 2.7 16.6Z" fill="rgba(30,30,30,.16)" stroke="#1a1a1a" stroke-width="1.25"/><path d="M5.4 7.4V15.2 M8.6 7.4V15.2" stroke="#1a1a1a" stroke-width="0.9" opacity=".8"/></svg>
<div style="left:806.88px;top:856.61px;width:792.00px;height:36.41px;background:#fff"></div>
<div class="tx" style="left:815.52px;top:873.85px;color:#3a3a3a">Spaans - half gevorderden 24-25 (do 11.15 - 12.45)</div>
<div style="left:1348.08px;top:867.85px;width:13.92px;height:13.92px;border:1px solid #c2c2c2;border-radius:2px;background:#fff;box-sizing:border-box"></div>
<div style="left:1467.60px;top:867.85px;width:13.92px;height:13.92px;border:1px solid #c2c2c2;border-radius:2px;background:#fff;box-sizing:border-box"></div>
<svg style="left:1561.92px;top:865.69px;width:15.36px;height:18.72px;" viewBox="0 0 14 18"><path d="M0.5 3.1H13.5V4.9H0.5Z" fill="#1a1a1a"/><path d="M4.3 3.2V1.5Q4.3 0.7 5.1 0.7H8.9Q9.7 0.7 9.7 1.5V3.2" fill="none" stroke="#1a1a1a" stroke-width="1.4"/><path d="M2.1 5.4H11.9L11.3 16.6Q11.2 17.4 10.4 17.4H3.6Q2.8 17.4 2.7 16.6Z" fill="rgba(30,30,30,.16)" stroke="#1a1a1a" stroke-width="1.25"/><path d="M5.4 7.4V15.2 M8.6 7.4V15.2" stroke="#1a1a1a" stroke-width="0.9" opacity=".8"/></svg>
<div style="left:806.88px;top:893.02px;width:792.00px;height:36.41px;background:#f5f5f5"></div>
<div class="tx" style="left:815.52px;top:910.26px;color:#3a3a3a">Spaans - meer gevorderden 24-25 (do 09.30 - 11.00)</div>
<div style="left:1348.08px;top:904.26px;width:13.92px;height:13.92px;border:1px solid #c2c2c2;border-radius:2px;background:#fff;box-sizing:border-box"></div>
<div style="left:1467.60px;top:904.26px;width:13.92px;height:13.92px;border:1px solid #c2c2c2;border-radius:2px;background:#fff;box-sizing:border-box"></div>
<svg style="left:1561.92px;top:902.10px;width:15.36px;height:18.72px;" viewBox="0 0 14 18"><path d="M0.5 3.1H13.5V4.9H0.5Z" fill="#1a1a1a"/><path d="M4.3 3.2V1.5Q4.3 0.7 5.1 0.7H8.9Q9.7 0.7 9.7 1.5V3.2" fill="none" stroke="#1a1a1a" stroke-width="1.4"/><path d="M2.1 5.4H11.9L11.3 16.6Q11.2 17.4 10.4 17.4H3.6Q2.8 17.4 2.7 16.6Z" fill="rgba(30,30,30,.16)" stroke="#1a1a1a" stroke-width="1.25"/><path d="M5.4 7.4V15.2 M8.6 7.4V15.2" stroke="#1a1a1a" stroke-width="0.9" opacity=".8"/></svg>
<div style="left:806.88px;top:929.76px;width:808.08px;height:41.28px;background:#f5f5f5;border-top:1px solid #dcdcdc;box-sizing:border-box"></div>
<div style="left:810.96px;top:936.48px;width:31.92px;height:29.76px;border:1px solid #d4d4d4;box-sizing:border-box;background:#fafafa"></div>
<svg style="left:822.60px;top:947.52px;width:8.64px;height:7.68px;" viewBox="0 0 10 10"><path d="M0 0H2V10H0Z M10 0V10L3 5Z" fill="#5d9cda"/></svg>
<div style="left:842.28px;top:936.48px;width:31.92px;height:29.76px;border:1px solid #d4d4d4;box-sizing:border-box;background:#fafafa"></div>
<svg style="left:855.60px;top:947.52px;width:5.28px;height:7.68px;" viewBox="0 0 6 10"><path d="M6 0V10L0 5Z" fill="#5d9cda"/></svg>
<div style="left:873.60px;top:936.48px;width:31.92px;height:29.76px;border:1px solid #d4d4d4;box-sizing:border-box;background:#fafafa"></div>
<svg style="left:886.92px;top:947.52px;width:5.28px;height:7.68px;" viewBox="0 0 6 10"><path d="M0 0V10L6 5Z" fill="#5d9cda"/></svg>
<div style="left:904.92px;top:936.48px;width:31.92px;height:29.76px;border:1px solid #d4d4d4;box-sizing:border-box;background:#fafafa"></div>
<svg style="left:916.56px;top:947.52px;width:8.64px;height:7.68px;" viewBox="0 0 10 10"><path d="M8 0H10V10H8Z M0 0V10L7 5Z" fill="#5d9cda"/></svg>
<div class="tx" style="left:1461.60px;top:950.88px;color:#959595">Items 1 - 8 van 8</div>
<svg style="left:1586.88px;top:944.16px;width:15.36px;height:15.36px;" viewBox="0 0 16 16"><path d="M10.2 2.3A6 6 0 1 0 13.9 7.2" fill="none" stroke="#3f8bd0" stroke-width="2.2"/><path d="M8.2 -0.8L13.2 2.4L8.2 5.2Z" fill="#3f8bd0"/></svg>
<div class="tx" style="left:808.80px;top:1006.32px;color:#1f84cf;font-size:12px">Ingevoerd op 01-09-2024 Laatst gewijzigd op 02-09-2024 00:08 door admin</div>
</div></body></html>
